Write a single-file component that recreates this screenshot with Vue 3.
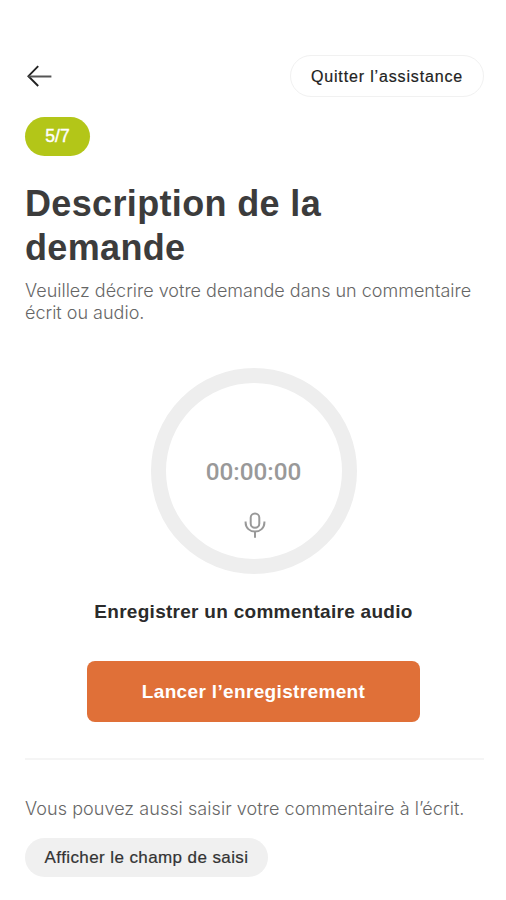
<template>
    <div class="description-page">
        <header class="top-bar">
            <button type="button" class="back-button" aria-label="Retour">
                <svg width="26" height="22" viewBox="0 0 26 22" fill="none">
                    <path d="M12.2 1.2 2.4 11.2l9.8 9.8" stroke="#222" stroke-width="1.9" />
                    <path d="M2.4 11.5h23" stroke="#555" stroke-width="2" />
                </svg>
            </button>
            <button type="button" class="quit-button">Quitter l’assistance</button>
        </header>

        <span class="step-badge">{{ currentStep }}/{{ totalSteps }}</span>

        <h1>Description de la demande</h1>
        <p class="intro">Veuillez décrire votre demande dans un commentaire écrit ou audio.</p>

        <section class="recorder">
            <div class="timer">
                <span class="time">{{ formattedTime }}</span>
                <svg class="mic" width="22" height="28" viewBox="0 0 22 28" fill="none" stroke="#999" stroke-width="2">
                    <rect x="6.7" y="1.4" width="8.6" height="14.4" rx="4.3" />
                    <path d="M1.6 9.6v1c0 5.4 4.2 9 9.4 9s9.4-3.6 9.4-9v-1" />
                    <path d="M11 19.6v6.2" />
                </svg>
            </div>
            <h2>Enregistrer un commentaire audio</h2>
            <button type="button" class="record-button">Lancer l’enregistrement</button>
        </section>

        <section class="written">
            <p>Vous pouvez aussi saisir votre commentaire à l’écrit.</p>
            <button type="button" class="show-field-button">Afficher le champ de saisi</button>
        </section>
    </div>
</template>

<script setup>
import { ref, computed } from 'vue';

const currentStep = ref(5);
const totalSteps = 7;
const seconds = ref(0);

const formattedTime = computed(() => {
    const parts = [Math.floor(seconds.value / 3600), Math.floor(seconds.value / 60) % 60, seconds.value % 60];
    return parts.map((part) => String(part).padStart(2, '0')).join(':');
});
</script>

<style>
body {
    margin: 0;
    background-color: #fff;
}
</style>

<style scoped>
.description-page {
    box-sizing: border-box;
    height: 900px;
    padding: 55px 22px 0 25px;
    display: flex;
    flex-direction: column;
    align-items: flex-start;
    font-family: 'Liberation Sans', sans-serif;
    color: #3c3c3c;
    background-color: #fff;
}

button {
    padding: 0;
    border: none;
    background: none;
    font-family: inherit;
    white-space: nowrap;
    cursor: pointer;
}

.top-bar {
    width: 100%;
    display: flex;
    justify-content: space-between;
    align-items: center;
}

.back-button {
    display: flex;
    margin-left: 1px;
}

.quit-button {
    box-sizing: border-box;
    width: 194px;
    height: 42px;
    padding-top: 2px;
    border: 1.5px solid #f1f1f1;
    border-radius: 21px;
    font-size: 16px;
    letter-spacing: 0.85px;
    color: #222;
    -webkit-text-stroke: 0.2px #222;
}

.step-badge {
    width: 65px;
    height: 39px;
    margin-top: 20px;
    border-radius: 20px;
    background-color: #b3c618;
    color: #fff;
    font-size: 17.5px;
    line-height: 39px;
    text-align: center;
    -webkit-text-stroke: 0.4px #fff;
}

h1 {
    margin: 26px 0 0;
    width: 340px;
    font-size: 36px;
    line-height: 44px;
    letter-spacing: 0.35px;
}

.intro,
.written p {
    margin: 0;
    font-family: Inter, 'Liberation Sans', sans-serif;
    font-size: 18px;
    font-weight: 300;
    line-height: 22px;
    color: #666;
}

.intro {
    margin-top: 10px;
}

.recorder {
    box-sizing: border-box;
    width: 100%;
    padding-right: 2px;
    display: flex;
    flex-direction: column;
    align-items: center;
}

.timer {
    box-sizing: border-box;
    width: 206px;
    height: 206px;
    margin-top: 44px;
    border: 15px solid #eee;
    border-radius: 50%;
    display: flex;
    flex-direction: column;
    align-items: center;
}

.time {
    margin-top: 74px;
    font-family: Roboto, sans-serif;
    font-size: 24.3px;
    font-weight: 500;
    line-height: 30px;
    color: #999;
}

.mic {
    margin: 25px 0 0 2px;
}

h2 {
    margin: 26px 0 0;
    font-size: 19px;
    line-height: 24px;
    letter-spacing: 0.28px;
    color: #2b2b2b;
}

.record-button {
    width: 333px;
    height: 61px;
    margin-top: 37px;
    border-radius: 8px;
    background-color: #e07038;
    color: #fff;
    font-size: 19px;
    font-weight: bold;
    letter-spacing: 0.35px;
}

.written {
    width: 100%;
    margin-top: 36px;
    padding-top: 38px;
    border-top: 2px solid #f5f5f5;
}

.written p {
    letter-spacing: 0.06px;
}

.show-field-button {
    display: block;
    width: 243px;
    height: 39px;
    margin-top: 18px;
    border-radius: 20px;
    background-color: #f0f0f0;
    font-size: 17px;
    letter-spacing: 0.4px;
    color: #333;
    -webkit-text-stroke: 0.2px #333;
}
</style>
